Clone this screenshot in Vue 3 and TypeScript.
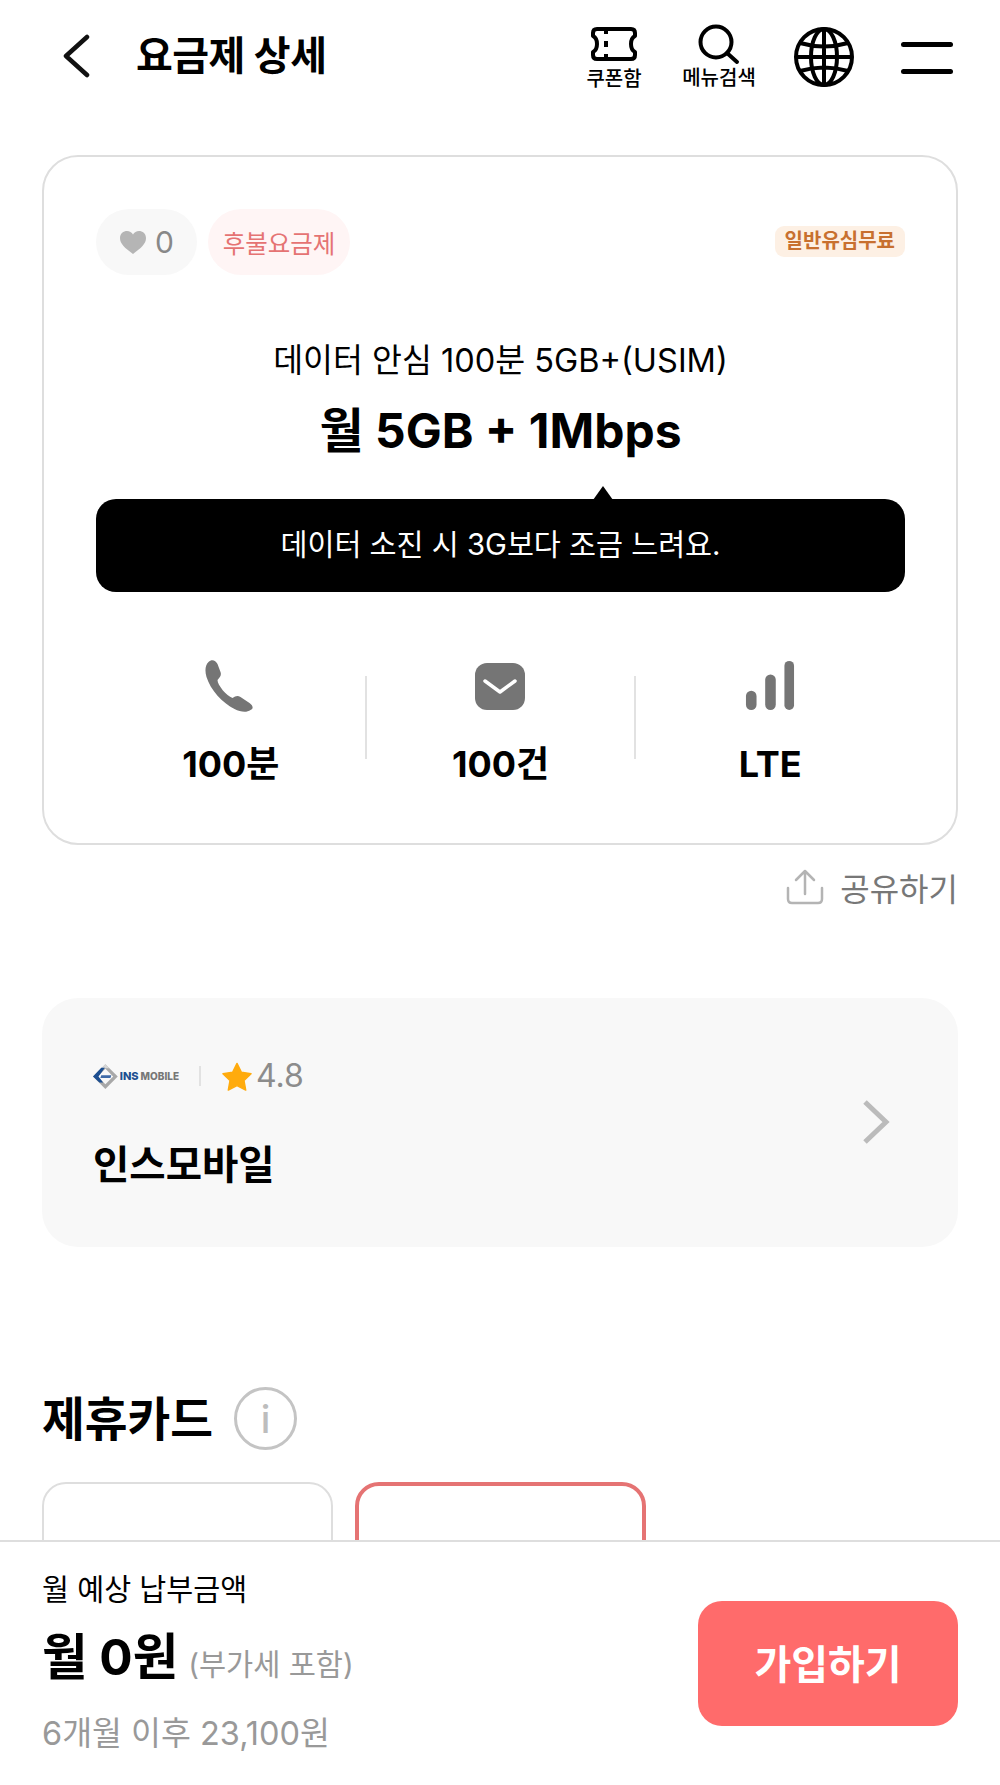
<template>
  <div class="page">
    <header class="top-bar">
      <svg class="back" width="30" height="44" viewBox="0 0 30 44"><path d="M26 3 L5 22 L26 41" /></svg>
      <h1 class="page-title">요금제 상세</h1>
      <div class="top-actions">
        <a class="action coupon">
          <svg width="48" height="36" viewBox="0 0 48 36" fill="none" stroke="#000" stroke-width="4" stroke-linejoin="round">
            <path d="M7 3 H41 Q45 3 45 7 V10 Q41 12 41 18 Q41 24 45 26 V29 Q45 33 41 33 H7 Q3 33 3 29 V26 Q7 24 7 18 Q7 12 3 10 V7 Q3 3 7 3 Z" />
            <path d="M16 3 V8 M16 15 V21 M16 28 V33" />
          </svg>
          <span>쿠폰함</span>
        </a>
        <a class="action search">
          <svg width="44" height="42" viewBox="0 0 44 42" fill="none" stroke="#000" stroke-width="4" stroke-linecap="round">
            <circle cx="19" cy="19" r="15.5" />
            <path d="M30 30 L40 39" />
          </svg>
          <span>메뉴검색</span>
        </a>
        <svg class="globe" width="62" height="62" viewBox="0 0 62 62" fill="none" stroke="#000" stroke-width="4">
          <circle cx="31" cy="31" r="28" />
          <ellipse cx="31" cy="31" rx="13" ry="28" />
          <path d="M31 3 V59 M3 31 H59 M7 17 Q31 24 55 17 M7 45 Q31 38 55 45" />
        </svg>
        <div class="burger"><i></i><i></i></div>
      </div>
    </header>

    <main class="content">
      <section class="plan-card">
        <div class="chip-row">
          <span class="chip like">
            <svg width="28" height="25" viewBox="0 0 28 25"><path d="M14 24 C6 18 1 14 1 8 C1 3.500 4.500 1 8 1 C10.500 1 12.800 2.300 14 4.500 C15.200 2.300 17.500 1 20 1 C23.500 1 27 3.500 27 8 C27 14 22 18 14 24 Z" fill="#b5b5b5" /></svg>
            0
          </span>
          <span class="chip type">후불요금제</span>
          <span class="usim">일반유심무료</span>
        </div>
        <p class="plan-name">데이터 안심 100분 5GB+(USIM)</p>
        <p class="plan-data">월 5GB + 1Mbps</p>
        <div class="tip">데이터 소진 시 3G보다 조금 느려요.</div>
        <div class="stats">
          <div class="stat">
            <svg class="phone" width="52" height="52" viewBox="0 0 52 52"><path d="M6 2 C9 -1 13 0 15 4 L18 12 C19 15 18 17 15 20 C15 25 24 36 30 38 C33 36 35 35 38 37 L47 43 C51 46 51 49 48 50 C44 53 38 52 32 49 C20 43 8 30 4 17 C2 10 3 5 6 2 Z" fill="#757575" /></svg>
            <strong>100분</strong>
          </div>
          <div class="stat">
            <svg class="mail" width="50" height="47" viewBox="0 0 50 47"><rect width="50" height="47" rx="12" fill="#757575" /><path d="M10 18 L25 29 L40 18" fill="none" stroke="#fff" stroke-width="3.500" stroke-linecap="round" stroke-linejoin="round" /></svg>
            <strong>100건</strong>
          </div>
          <div class="stat">
            <svg width="52" height="52" viewBox="0 0 52 52" fill="#757575"><rect x="1" y="32" width="11" height="20" rx="5.500" /><rect x="21" y="15" width="11" height="37" rx="5.500" /><rect x="41" y="1" width="10" height="51" rx="5" /></svg>
            <strong>LTE</strong>
          </div>
        </div>
      </section>

      <div class="share">
        <svg width="38" height="36" viewBox="0 0 38 36" fill="none" stroke="#b4b4b4" stroke-width="2.500" stroke-linecap="round" stroke-linejoin="round">
          <path d="M2 19 V30 Q2 34 6 34 H32 Q36 34 36 30 V19" />
          <path d="M19 25 V2 M10 11 L19 2 L28 11" />
        </svg>
        <span>공유하기</span>
      </div>

      <section class="seller">
        <div class="seller-info">
          <div class="seller-top">
            <div class="logo">
              <svg width="27" height="27" viewBox="0 0 27 27">
                <path d="M13.500 0 L27 13.500 L13.500 27 L0 13.500 Z" fill="#a8a8a8" />
                <path d="M13.500 0 L18 4.500 H9 Z" fill="#d6d6d6" />
                <path d="M13.500 5 L22 13.500 L13.500 22 L5 13.500 Z" fill="#f8f8f8" />
                <path d="M9 4 H13 L6 13.500 L11 20 H7 L0 13.500 Z" fill="#1d4f91" />
                <path d="M9 12 H20 L19 15 H8 Z" fill="#3f6aa8" />
              </svg>
              <b>INS</b><span>MOBILE</span>
            </div>
            <i class="seller-sep"></i>
            <svg width="30" height="29" viewBox="0 0 32 30"><path d="M16 1 L20.700 10.500 L31 12 L23.500 19.300 L25.300 29.500 L16 24.700 L6.700 29.500 L8.500 19.300 L1 12 L11.300 10.500 Z" fill="#ffab0d" stroke="#ffab0d" stroke-width="1.500" stroke-linejoin="round" /></svg>
            <span class="rating">4.8</span>
          </div>
          <div class="seller-name">인스모바일</div>
        </div>
        <svg class="seller-arrow" width="28" height="46" viewBox="0 0 28 46"><path d="M3 3 L24 23 L3 43" /></svg>
      </section>

      <div class="section-head">
        <h2>제휴카드</h2>
        <span class="info">i</span>
      </div>
      <div class="card-list">
        <div class="card-item"></div>
        <div class="card-item selected"></div>
      </div>
    </main>

    <footer class="pay-bar">
      <div class="pay-info">
        <div class="pay-label">월 예상 납부금액</div>
        <div class="pay-price"><strong>월 0원</strong><span>(부가세 포함)</span></div>
        <div class="pay-after">6개월 이후 23,100원</div>
      </div>
      <button class="join">가입하기</button>
    </footer>
  </div>
</template>

<script setup lang="ts">
</script>

<style>
html, body {
  margin: 0;
  background: #fff;
}
</style>

<style scoped>
.page {
  height: 1785px;
  overflow: hidden;
  background: #fff;
  color: #000;
  font-family: Inter, "Noto Sans CJK KR", sans-serif;
}

.top-bar {
  display: flex;
  align-items: flex-start;
  height: 155px;
  box-sizing: border-box;
  padding: 34px 47px 0 61px;
}

.back {
  fill: none;
  stroke: #111;
  stroke-width: 4.500;
  stroke-linecap: round;
  stroke-linejoin: round;
}

.page-title {
  margin: -4px 0 0 45px;
  font-size: 40px;
  line-height: 52px;
  font-weight: 700;
  letter-spacing: -0.5px;
}

.top-actions {
  display: flex;
  align-items: flex-start;
  margin-left: auto;
  margin-top: -11px;
}

.action {
  display: flex;
  flex-direction: column;
  align-items: center;
  width: 90px;
}

.action span {
  font-size: 20px;
  line-height: 26px;
  font-weight: 500;
  white-space: nowrap;
}

.action svg {
  display: block;
}

.coupon {
  padding-top: 3px;
}

.coupon span {
  margin-top: 4px;
}

.search {
  margin-left: 15px;
}

.search span {
  margin-top: 0;
}

.globe {
  display: block;
  margin-left: 29px;
  margin-top: 3px;
}

.burger {
  margin-left: 46px;
  margin-top: 19px;
}

.burger i {
  display: block;
  width: 52px;
  height: 5px;
  border-radius: 3px;
  background: #000;
}

.burger i + i {
  margin-top: 22px;
}

.content {
  padding: 0 42px;
}

.plan-card {
  box-sizing: border-box;
  height: 690px;
  padding: 52px 51px 0 52px;
  border: 2px solid #dedede;
  border-radius: 36px;
}

.chip-row {
  display: flex;
  align-items: flex-start;
  gap: 11px;
}

.chip {
  display: flex;
  align-items: center;
  justify-content: center;
  height: 66px;
  border-radius: 33px;
}

.chip.like {
  width: 101px;
  gap: 8px;
  background: #f8f8f8;
  color: #888;
  font-size: 30px;
}

.chip.type {
  width: 142px;
  background: #fff5f5;
  color: #e57373;
  font-size: 24.500px;
}

.usim {
  margin-left: auto;
  margin-top: 17px;
  padding: 0 10px;
  height: 31px;
  line-height: 30px;
  border-radius: 9px;
  background: #fdf0e4;
  color: #c8702f;
  font-size: 20px;
  font-weight: 700;
}

.plan-name {
  margin: 66px 0 0;
  text-align: center;
  font-size: 32.500px;
  line-height: 40px;
}

.plan-data {
  margin: 20px 0 0;
  text-align: center;
  font-size: 48px;
  line-height: 60px;
  font-weight: 700;
}

.tip {
  position: relative;
  margin-top: 38px;
  height: 93px;
  line-height: 91px;
  border-radius: 20px;
  background: #000;
  color: #fff;
  text-align: center;
  font-size: 29.300px;
}

.tip::before {
  content: "";
  position: absolute;
  left: 497px;
  top: -13px;
  border-left: 10px solid transparent;
  border-right: 10px solid transparent;
  border-bottom: 14px solid #000;
}

.stats {
  display: grid;
  grid-template-columns: repeat(3, 1fr);
  margin-top: 68px;
}

.stat {
  position: relative;
  display: flex;
  flex-direction: column;
  align-items: center;
}

.stat + .stat::before {
  content: "";
  position: absolute;
  left: -1px;
  top: 16px;
  width: 2px;
  height: 83px;
  background: #e2e2e2;
}

.stat svg {
  display: block;
  height: 50px;
}

.stat svg.phone {
  width: 53px;
  height: 52px;
  margin-bottom: -2px;
  margin-left: -4px;
}

.stat svg.mail {
  height: 47px;
  margin-top: 3px;
}

.stat strong {
  margin-top: 32px;
  font-size: 36px;
  line-height: 44px;
  font-weight: 700;
}

.share {
  display: flex;
  align-items: center;
  justify-content: flex-end;
  gap: 16px;
  margin-top: 19px;
  height: 46px;
  color: #777;
  font-size: 32px;
}

.seller {
  display: flex;
  align-items: center;
  justify-content: space-between;
  box-sizing: border-box;
  height: 249px;
  margin-top: 88px;
  padding: 6px 68px 0 51px;
  border-radius: 36px;
  background: #f8f8f8;
}

.seller-top {
  display: flex;
  align-items: center;
}

.logo {
  display: flex;
  align-items: center;
  width: 86px;
  white-space: nowrap;
  font-size: 10px;
  color: #777;
  font-weight: 800;
}

.logo b {
  margin-left: 2px;
  margin-right: 2px;
  color: #1d4f91;
  font-size: 11px;
  font-weight: 800;
}

.seller-sep {
  width: 2px;
  height: 20px;
  margin: 0 21px 0 20px;
  background: #e2e2e2;
}

.rating {
  margin-left: 4px;
  color: #8c8c8c;
  font-size: 32px;
  line-height: 36px;
}

.seller-name {
  margin-top: 43px;
  font-size: 39.500px;
  line-height: 56px;
  font-weight: 700;
}

.seller-arrow {
  margin-top: -7px;
  fill: none;
  stroke: #bbb;
  stroke-width: 5;
}

.section-head {
  display: flex;
  align-items: center;
  gap: 21px;
  margin-top: 140px;
}

.section-head h2 {
  margin: 0;
  font-size: 46.500px;
  line-height: 62px;
  font-weight: 700;
}

.info {
  display: flex;
  align-items: center;
  justify-content: center;
  box-sizing: border-box;
  width: 63px;
  height: 63px;
  border: 3px solid #c4c4c4;
  border-radius: 50%;
  color: #bdbdbd;
  font-size: 38px;
  font-weight: 500;
}

.card-list {
  display: flex;
  gap: 22px;
  margin-top: 32px;
}

.card-item {
  box-sizing: border-box;
  width: 291px;
  height: 240px;
  border: 2px solid #dedede;
  border-radius: 24px;
}

.card-item.selected {
  border: 4px solid #e57373;
}

.pay-bar {
  position: fixed;
  left: 0;
  right: 0;
  bottom: 0;
  display: flex;
  align-items: flex-start;
  justify-content: space-between;
  box-sizing: border-box;
  height: 245px;
  padding: 0 42px;
  border-top: 2px solid #dedede;
  background: #fff;
}

.pay-label {
  margin-top: 28px;
  font-size: 29.300px;
  line-height: 40px;
}

.pay-price {
  display: flex;
  align-items: baseline;
  gap: 10px;
  margin-top: 14px;
}

.pay-price strong {
  font-size: 49.500px;
  line-height: 66px;
  font-weight: 700;
}

.pay-price span {
  color: #999;
  font-size: 29.500px;
}

.pay-after {
  margin-top: 22px;
  color: #999;
  font-size: 32.500px;
  line-height: 44px;
}

.join {
  width: 260px;
  height: 125px;
  margin-top: 59px;
  padding: 0 0 4px;
  border: 0;
  border-radius: 24px;
  background: #ff6b6b;
  color: #fff;
  font-family: inherit;
  font-size: 40px;
  font-weight: 700;
}
</style>
